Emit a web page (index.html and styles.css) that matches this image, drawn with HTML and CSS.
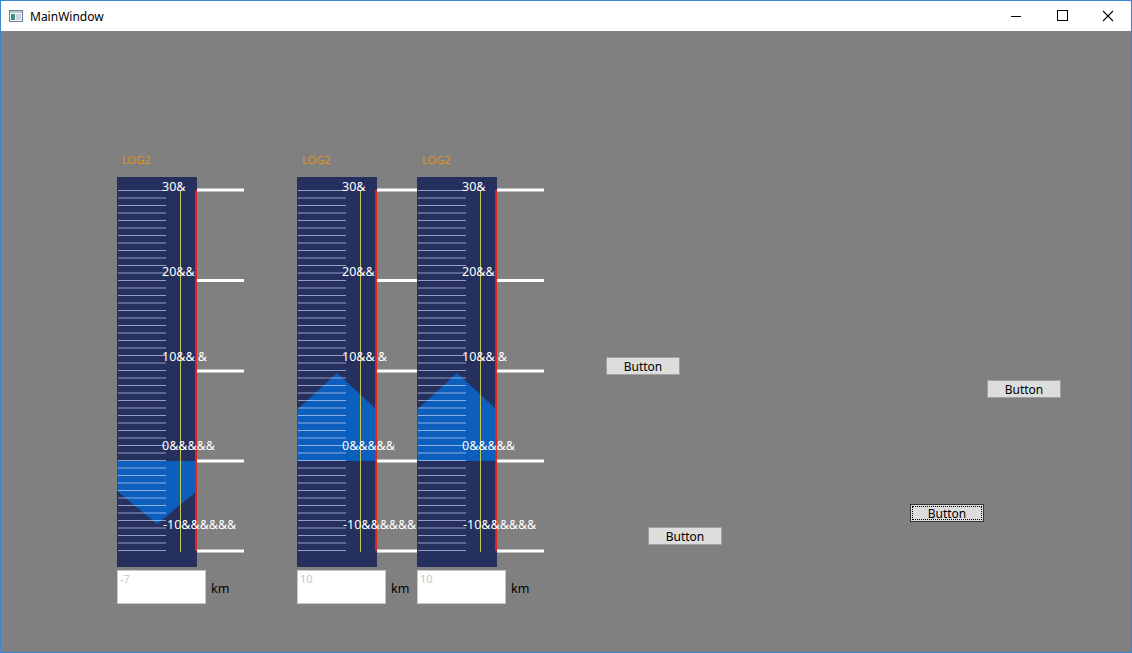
FILE: index.html
```html
<!DOCTYPE html>
<html>
<head>
<meta charset="utf-8">
<title>MainWindow</title>
<link rel="stylesheet" href="styles.css">
</head>
<body>
<div class="window">
  <div class="titlebar">
    <svg class="app-icon" width="16" height="16" viewBox="0 0 16 16">
      <rect x="1.5" y="2.5" width="13" height="11" fill="#f4f6f8" stroke="#6f8394"/>
      <rect x="2" y="3" width="12" height="2" fill="#b9c6d2"/>
      <rect x="3" y="6" width="4" height="6" fill="#3f8e8a"/>
      <rect x="8" y="6" width="5" height="6" fill="#c9d4de"/>
    </svg>
    <span class="title">MainWindow</span>
    <div class="controls">
      <svg class="ctl" width="46" height="30" viewBox="0 0 46 30"><line x1="18" y1="15.5" x2="28" y2="15.5" stroke="#000" stroke-width="1"/></svg>
      <svg class="ctl" width="46" height="30" viewBox="0 0 46 30"><rect x="18.5" y="9.5" width="10" height="10" fill="none" stroke="#000" stroke-width="1"/></svg>
      <svg class="ctl" width="46" height="30" viewBox="0 0 46 30"><path d="M18 10 L28 20 M28 10 L18 20" stroke="#000" stroke-width="1.1"/></svg>
    </div>
  </div>
  <div class="client">
    <div class="gauge g1">
      <div class="log">LOG2</div>
      <svg class="bar" width="130" height="390" viewBox="0 0 130 390">
        <rect x="0" y="0" width="80" height="390" fill="#25305e"/>
        <polygon points="0,284 0,314 40,347 80,314 80,284" fill="#0d5fbe"/>
        <g class="ticks"></g>
        <line x1="63.5" y1="13" x2="63.5" y2="375" stroke="#c3c94e" stroke-width="1"/>
        <rect x="78" y="13" width="2" height="361" fill="#e3201c"/>
        <g class="major"></g>
        <g class="labels">
          <text x="45" y="11">30&amp;</text>
          <text x="45" y="96">20&amp;&amp;</text>
          <text x="45" y="181">10&amp;&amp; &amp;</text>
          <text x="45" y="270">0&amp;&amp;&amp;&amp;&amp;</text>
          <text x="46" y="349">-10&amp;&amp;&amp;&amp;&amp;&amp;</text>
        </g>
      </svg>
      <div class="entry"><div class="box">-7</div><span class="unit">km</span></div>
    </div>
    <div class="gauge g2">
      <div class="log">LOG2</div>
      <svg class="bar" width="130" height="390" viewBox="0 0 130 390">
        <rect x="0" y="0" width="80" height="390" fill="#25305e"/>
        <polygon points="0,284 0,233 40,196 80,233 80,284" fill="#0d5fbe"/>
        <g class="ticks"></g>
        <line x1="63.5" y1="13" x2="63.5" y2="375" stroke="#c3c94e" stroke-width="1"/>
        <rect x="78" y="13" width="2" height="361" fill="#e3201c"/>
        <g class="major"></g>
        <g class="labels">
          <text x="45" y="11">30&amp;</text>
          <text x="45" y="96">20&amp;&amp;</text>
          <text x="45" y="181">10&amp;&amp; &amp;</text>
          <text x="45" y="270">0&amp;&amp;&amp;&amp;&amp;</text>
          <text x="46" y="349">-10&amp;&amp;&amp;&amp;&amp;&amp;</text>
        </g>
      </svg>
      <div class="entry"><div class="box">10</div><span class="unit">km</span></div>
    </div>
    <div class="gauge g3">
      <div class="log">LOG2</div>
      <svg class="bar" width="130" height="390" viewBox="0 0 130 390">
        <rect x="0" y="0" width="80" height="390" fill="#25305e"/>
        <polygon points="0,284 0,233 40,196 80,233 80,284" fill="#0d5fbe"/>
        <g class="ticks"></g>
        <line x1="63.5" y1="13" x2="63.5" y2="375" stroke="#c3c94e" stroke-width="1"/>
        <rect x="78" y="13" width="2" height="361" fill="#e3201c"/>
        <g class="major"></g>
        <g class="labels">
          <text x="45" y="11">30&amp;</text>
          <text x="45" y="96">20&amp;&amp;</text>
          <text x="45" y="181">10&amp;&amp; &amp;</text>
          <text x="45" y="270">0&amp;&amp;&amp;&amp;&amp;</text>
          <text x="46" y="349">-10&amp;&amp;&amp;&amp;&amp;&amp;</text>
        </g>
      </svg>
      <div class="entry"><div class="box">10</div><span class="unit">km</span></div>
    </div>

    <button class="btn b1">Button</button>
    <button class="btn b2">Button</button>
    <button class="btn b3 focused">Button</button>
    <button class="btn b4">Button</button>
  </div>
</div>
<script src="script.js"></script>
</body>
</html>
```

FILE: script.js
```js
var NS = "http://www.w3.org/2000/svg";
document.querySelectorAll(".bar").forEach(function (svg) {
  var ticks = svg.querySelector(".ticks");
  for (var i = 0; i <= 48; i++) {
    var y = 13.5 + 7.5 * i;
    var l = document.createElementNS(NS, "line");
    l.setAttribute("x1", "1");
    l.setAttribute("x2", "49");
    l.setAttribute("y1", y);
    l.setAttribute("y2", y);
    ticks.appendChild(l);
  }
  var major = svg.querySelector(".major");
  [13, 103.5, 194, 284, 374].forEach(function (y) {
    var l = document.createElementNS(NS, "line");
    l.setAttribute("x1", "80");
    l.setAttribute("x2", "127");
    l.setAttribute("y1", y);
    l.setAttribute("y2", y);
    major.appendChild(l);
  });
});
```

FILE: styles.css
```css
html, body {
  margin: 0;
  padding: 0;
  background: #808080;
}
.window {
  width: 1132px;
  height: 653px;
  box-sizing: border-box;
  border: 1px solid #3a86d4;
  display: flex;
  flex-direction: column;
  overflow: hidden;
  font-family: "Noto Sans", "Liberation Sans", sans-serif;
}
.titlebar {
  height: 30px;
  flex: none;
  background: #ffffff;
  display: flex;
  align-items: center;
}
.app-icon {
  margin-left: 7px;
  flex: none;
}
.title {
  margin-left: 6px;
  font-size: 12px;
  color: #000;
}
.controls {
  margin-left: auto;
  display: flex;
}
.ctl {
  display: block;
}
.client {
  flex: 1;
  position: relative;
  background: #808080;
}
.gauge {
  position: absolute;
  top: 119px;
  width: 130px;
  display: flex;
  flex-direction: column;
}
.g1 { left: 116px; }
.g2 { left: 296px; }
.g3 { left: 416px; }
.log {
  height: 27px;
  padding-left: 5px;
  font-size: 11px;
  line-height: 20px;
  color: #e0921e;
  box-sizing: border-box;
}
.bar {
  display: block;
  overflow: visible;
}
.ticks line {
  stroke: rgba(220, 228, 255, 0.62);
  stroke-width: 1;
}
.major line {
  stroke: #ffffff;
  stroke-width: 3;
}
.labels text {
  fill: #ffffff;
  font-family: "Noto Sans", "Liberation Sans", sans-serif;
  font-size: 12.5px;
  dominant-baseline: middle;
}
.entry {
  margin-top: 3px;
  display: flex;
  align-items: center;
}
.box {
  width: 89px;
  height: 34px;
  box-sizing: border-box;
  background: #ffffff;
  border: 1px solid #c8c8c8;
  color: #c8c8c8;
  font-size: 11px;
  padding: 1px 2px;
  line-height: 14px;
}
.unit {
  margin-left: 5px;
  margin-top: 2px;
  font-size: 12.5px;
  color: #000;
}
.btn {
  position: absolute;
  width: 74px;
  height: 18px;
  box-sizing: border-box;
  margin: 0;
  padding: 0;
  background: #dddddd;
  border: 1px solid #a0a0a0;
  font-family: "Noto Sans", "Liberation Sans", sans-serif;
  font-size: 12px;
  line-height: 15px;
  color: #000;
}
.b1 { left: 605px; top: 326px; }
.b2 { left: 986px; top: 349px; }
.b3 { left: 909px; top: 473px; }
.b4 { left: 647px; top: 496px; }
.focused {
  border-color: #333;
  outline: 1px dotted #000;
  outline-offset: -3px;
}
```
